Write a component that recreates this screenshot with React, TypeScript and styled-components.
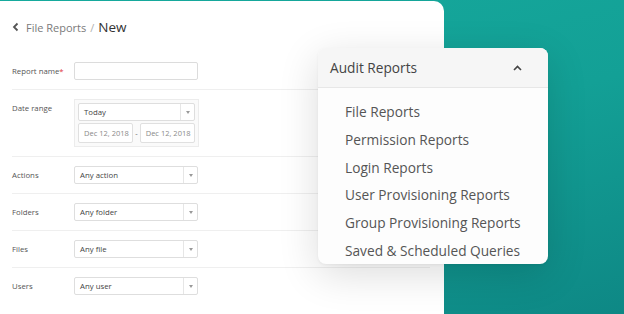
import React from "react";
import styled, { createGlobalStyle } from "styled-components";

const Global = createGlobalStyle`
  html, body { margin: 0; padding: 0; }
  body { font-family: "Open Sans", "Liberation Sans", sans-serif; }
  * { box-sizing: border-box; }
`;

const Stage = styled.div`
  position: relative;
  width: 624px;
  height: 314px;
  overflow: hidden;
  background: linear-gradient(165deg, #16aa9d 0%, #13a096 50%, #0e8885 100%);
  padding-top: 1px;
`;

const Card = styled.div`
  width: 444px;
  height: 330px;
  background: #fff;
  border-top-right-radius: 10px;
  padding: 0 14px 0 12px;
`;

const Crumbs = styled.div`
  height: 52px;
  display: flex;
  align-items: center;
  gap: 4px;
  color: #7a7a7a;
  font-size: 11px;
`;

const Back = styled.svg`
  width: 8px;
  height: 10px;
  margin-right: 2px;
`;

const Current = styled.span`
  color: #333;
  font-size: 13.5px;
`;

const Slash = styled.span`
  color: #b0b0b0;
`;

const Row = styled.div`
  display: grid;
  grid-template-columns: 62px 125px;
  align-items: start;
  padding: 9px 0;
  border-bottom: 1px solid #efefef;
  &:last-child { border-bottom: none; }
`;

const Label = styled.div`
  font-size: 7.8px;
  line-height: 18px;
  color: #555;
`;

const Req = styled.span`
  color: #e0313a;
`;

const Input = styled.div`
  height: 18px;
  width: 124px;
  border: 1px solid #dcdcdc;
  border-radius: 2px;
  background: #fff;
`;

const SelectBox = styled.div<{ $w?: number }>`
  height: 18px;
  width: ${(p) => p.$w ?? 124}px;
  border: 1px solid #dedede;
  border-radius: 2px;
  background: #fff;
  display: flex;
  align-items: stretch;
  font-size: 7.8px;
  color: #444;
`;

const SelectText = styled.div`
  flex: 1;
  display: flex;
  align-items: center;
  padding-left: 5px;
`;

const Arrow = styled.div`
  width: 14px;
  border-left: 1px solid #e6e6e6;
  display: flex;
  align-items: center;
  justify-content: center;
  &::after {
    content: "";
    border-left: 2px solid transparent;
    border-right: 2px solid transparent;
    border-top: 3px solid #999;
  }
`;

const DateGroup = styled.div`
  width: 125px;
  border: 1px solid #ececec;
  background: #fafafa;
  padding: 3px;
  display: flex;
  flex-direction: column;
  gap: 2px;
`;

const DateLine = styled.div`
  display: flex;
  align-items: center;
  gap: 2px;
  font-size: 7.5px;
  color: #666;
  white-space: nowrap;
`;

const DateInput = styled.div`
  width: 56px;
  height: 20px;
  border: 1px solid #e0e0e0;
  background: #fff;
  border-radius: 2px;
  display: flex;
  align-items: center;
  padding-left: 5px;
  color: #8a8a8a;
  overflow: hidden;
`;

const Menu = styled.div`
  position: absolute;
  left: 318px;
  top: 48px;
  width: 230px;
  height: 216px;
  border-radius: 8px;
  background: #fdfdfd;
  box-shadow: 0 10px 40px rgba(0, 0, 0, 0.14), 0 1px 3px rgba(0, 0, 0, 0.05);
  overflow: hidden;
`;

const MenuHead = styled.div`
  height: 40px;
  display: flex;
  align-items: center;
  justify-content: space-between;
  padding: 0 26px 0 12px;
  background: #f6f6f6;
  border-bottom: 1px solid #e7e7e7;
  font-size: 13.7px;
  color: #444;
`;

const MenuList = styled.div`
  display: flex;
  flex-direction: column;
  padding: 10px 0 0 27px;
`;

const MenuItem = styled.div`
  height: 27.7px;
  display: flex;
  align-items: center;
  font-size: 13.7px;
  color: #555;
`;

const Select = ({ value }: { value: string }) => (
  <SelectBox>
    <SelectText>{value}</SelectText>
    <Arrow />
  </SelectBox>
);

const items = [
  "File Reports",
  "Permission Reports",
  "Login Reports",
  "User Provisioning Reports",
  "Group Provisioning Reports",
  "Saved & Scheduled Queries",
];

export default function App() {
  return (
    <>
      <Global />
      <Stage>
        <Card>
          <Crumbs>
            <Back viewBox="0 0 8 10">
              <path d="M5.5 1.5 L2 5 L5.5 8.5" fill="none" stroke="#555" strokeWidth="1.8" />
            </Back>
            <span>File Reports</span>
            <Slash>/</Slash>
            <Current>New</Current>
          </Crumbs>
          <Row>
            <Label>
              Report name<Req>*</Req>
            </Label>
            <Input />
          </Row>
          <Row>
            <Label>Date range</Label>
            <DateGroup>
              <SelectBox $w={117}>
                <SelectText>Today</SelectText>
                <Arrow />
              </SelectBox>
              <DateLine>
                <DateInput>Dec 12, 2018</DateInput>
                <span>-</span>
                <DateInput>Dec 12, 2018</DateInput>
              </DateLine>
            </DateGroup>
          </Row>
          <Row>
            <Label>Actions</Label>
            <Select value="Any action" />
          </Row>
          <Row>
            <Label>Folders</Label>
            <Select value="Any folder" />
          </Row>
          <Row>
            <Label>Files</Label>
            <Select value="Any file" />
          </Row>
          <Row>
            <Label>Users</Label>
            <Select value="Any user" />
          </Row>
        </Card>
        <Menu>
          <MenuHead>
            <span>Audit Reports</span>
            <svg width="9" height="6" viewBox="0 0 9 6">
              <path d="M1 5 L4.5 1.5 L8 5" fill="none" stroke="#444" strokeWidth="1.6" />
            </svg>
          </MenuHead>
          <MenuList>
            {items.map((t) => (
              <MenuItem key={t}>{t}</MenuItem>
            ))}
          </MenuList>
        </Menu>
      </Stage>
    </>
  );
}
